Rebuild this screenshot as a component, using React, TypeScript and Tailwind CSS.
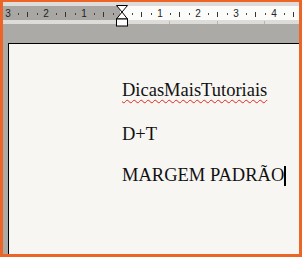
import React from "react";

const numbers = [
  { x: 5, label: "3" },
  { x: 43, label: "2" },
  { x: 81, label: "1" },
  { x: 157, label: "1" },
  { x: 195, label: "2" },
  { x: 233, label: "3" },
  { x: 271, label: "4" },
];

// quarter marks between numbers: dot, tick, dot
const marks: { x: number; kind: "dot" | "tick" }[] = [];
[5, 43, 81, 119, 157, 195, 233, 271].forEach((n) => {
  marks.push({ x: n + 9.5, kind: "dot" });
  marks.push({ x: n + 19, kind: "tick" });
  marks.push({ x: n + 28.5, kind: "dot" });
});

const Ruler: React.FC = () => (
  <div className="relative h-[41px] bg-[#acaaa6]">
    <div className="h-[4px] bg-[#dedcd8]" />
    <div className="flex h-[14px]">
      <div className="w-[117px] bg-[#a9a7a3]" />
      <div className="flex-1 bg-[#fbfbfa]" />
    </div>
    <div className="h-[4px] bg-[#dedcd8]" />

    {numbers.map((n, i) => (
      <span
        key={i}
        className="absolute top-[5px] -translate-x-1/2 [font-family:'Liberation_Sans',Arial,sans-serif] text-[10px] leading-[14px] text-[#222]"
        style={{ left: n.x }}
      >
        {n.label}
      </span>
    ))}
    {marks.map((m, i) =>
      m.kind === "tick" ? (
        <span
          key={i}
          className="absolute top-[10px] h-[5px] w-px bg-[#333]"
          style={{ left: m.x }}
        />
      ) : (
        <span
          key={i}
          className="absolute top-[11px] h-[2px] w-px bg-[#444]"
          style={{ left: m.x }}
        />
      )
    )}
    {[166, 214, 261].map((x) => (
      <span
        key={x}
        className="absolute top-[19px] h-[3px] w-px bg-[#b8b6b2]"
        style={{ left: x }}
      />
    ))}

    {/* indent marker */}
    <svg
      className="absolute left-[113px] top-[3px]"
      width="12"
      height="22"
      viewBox="0 0 12 22"
    >
      <polygon points="0.5,0.5 11.5,0.5 6,7 11.5,14 0.5,14 6,7" fill="#fff" stroke="#000" strokeWidth="1" />
      <rect x="0.5" y="14" width="11" height="7" fill="#fff" stroke="#000" strokeWidth="1" />
    </svg>
  </div>
);

export default function App() {
  return (
    <div className="flex h-[257px] w-[302px] flex-col border-t-2 border-r-[3px] border-b-[3px] border-l-[3px] border-[#ec6526] bg-[#acaaa6]">
      <Ruler />
      <div className="flex flex-1">
        <div className="w-[5px]" />
        <div className="flex-1 border-t border-l border-black bg-[#f7f6f3] pt-[36px] pl-[113px] [font-family:'Liberation_Serif','Times_New_Roman',serif] text-[18.5px] leading-[21px] text-[#111]">
          <p>
            <span className="underline decoration-wavy decoration-[#e0261c] decoration-1 underline-offset-[3px]">
              DicasMaisTutoriais
            </span>
          </p>
          <p className="mt-[23px]">D+T</p>
          <p className="mt-[20px] whitespace-nowrap">
            MARGEM PADRÃO
            <span className="inline-block h-[20px] w-[2px] bg-black align-[-5px]" />
          </p>
        </div>
      </div>
    </div>
  );
}
